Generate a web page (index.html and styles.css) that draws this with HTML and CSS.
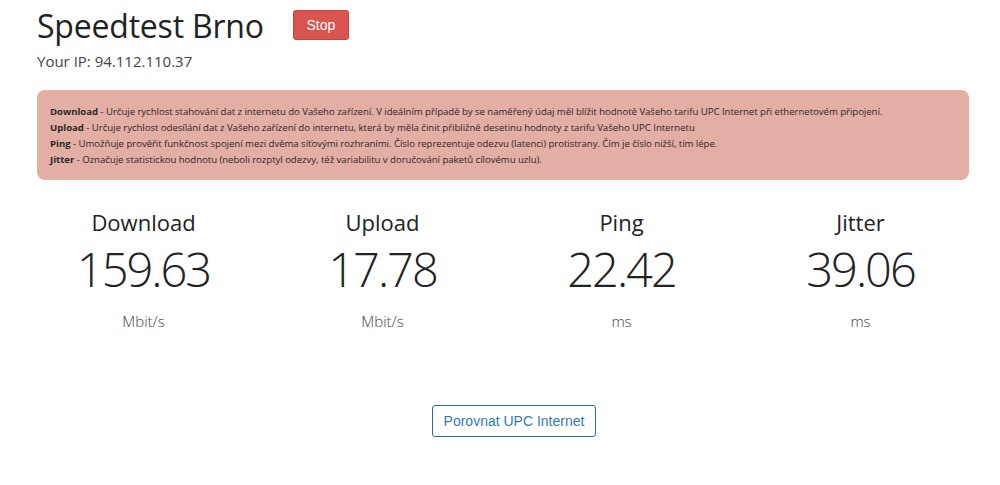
FILE: index.html
```html
<!DOCTYPE html>
<html>
<head>
<meta charset="utf-8">
<link rel="stylesheet" href="styles.css">
</head>
<body>
<div class="page">
  <div class="header">
    <h1 class="title">Speedtest Brno</h1>
    <button class="btn-stop">Stop</button>
  </div>
  <div class="ip">Your IP: 94.112.110.37</div>
  <div class="alert">
    <div><b>Download</b> - Určuje rychlost stahování dat z internetu do Vašeho zařízení. V ideálním případě by se naměřený údaj měl blížit hodnotě Vašeho tarifu UPC Internet při ethernetovém připojení.</div>
    <div><b>Upload</b> - Určuje rychlost odesílání dat z Vašeho zařízení do internetu, která by měla činit přibližně desetinu hodnoty z tarifu Vašeho UPC Internetu</div>
    <div><b>Ping</b> - Umožňuje prověřit funkčnost spojení mezi dvěma síťovými rozhraními. Číslo reprezentuje odezvu (latenci) protistrany. Čím je číslo nižší, tím lépe.</div>
    <div><b>Jitter</b> - Označuje statistickou hodnotu (neboli rozptyl odezvy, též variabilitu v doručování paketů cílovému uzlu).</div>
  </div>
  <div class="stats">
    <div class="stat"><div class="label">Download</div><div class="value">159.63</div><div class="unit">Mbit/s</div></div>
    <div class="stat"><div class="label">Upload</div><div class="value">17.78</div><div class="unit">Mbit/s</div></div>
    <div class="stat"><div class="label">Ping</div><div class="value">22.42</div><div class="unit">ms</div></div>
    <div class="stat"><div class="label">Jitter</div><div class="value">39.06</div><div class="unit">ms</div></div>
  </div>
  <div class="actions">
    <button class="btn-compare">Porovnat UPC Internet</button>
  </div>
</div>
</body>
</html>
```
FILE: styles.css
```css
html, body {
  margin: 0;
  padding: 0;
  background: #fff;
}
body {
  font-family: "Open Sans", "Noto Sans", sans-serif;
  color: #333;
}
.page {
  padding: 0 19px 0 37px;
}
.header {
  display: flex;
  align-items: flex-start;
  padding-top: 6px;
  height: 44px;
}
.title {
  margin: 0;
  font-weight: 400;
  font-size: 32px;
  line-height: 40px;
  letter-spacing: -0.2px;
  color: #222;
}
.btn-stop {
  margin-left: 29px;
  margin-top: 4px;
  width: 56px;
  height: 30px;
  background: #d9534f;
  border: 1px solid #d43f3a;
  border-radius: 3px;
  color: #fff;
  font-family: "Liberation Sans", Arial, sans-serif;
  font-size: 14px;
  padding: 0;
}
.ip {
  font-size: 15px;
  line-height: 20px;
  color: #444;
  margin-top: 1px;
}
.alert {
  margin-top: 19px;
  margin-right: 12px;
  background: #e3aea3;
  border-radius: 8px;
  padding: 14px 13px 12px;
  font-size: 9.65px;
  line-height: 16px;
  color: #2a2a2a;
  letter-spacing: -0.05px;
}
.alert b {
  font-weight: 700;
}
.stats {
  display: grid;
  grid-template-columns: repeat(4, 239px);
  margin-left: -13px;
  margin-top: 27px;
}
.stat {
  text-align: center;
}
.label {
  font-size: 22px;
  line-height: 30px;
  color: #222;
}
.value {
  font-size: 47px;
  font-weight: 300;
  line-height: 56px;
  color: #222;
  letter-spacing: -2px;
  margin-top: 4px;
}
.unit {
  font-size: 15px;
  font-weight: 300;
  line-height: 20px;
  color: #444;
  margin-top: 14px;
}
.actions {
  display: flex;
  padding-left: 395px;
  margin-top: 74px;
}
.btn-compare {
  width: 164px;
  height: 32px;
  background: #fff;
  border: 1px solid #2e6da4;
  border-radius: 3px;
  color: #337ab7;
  font-family: "Liberation Sans", Arial, sans-serif;
  font-size: 14px;
  padding: 0;
}
```
